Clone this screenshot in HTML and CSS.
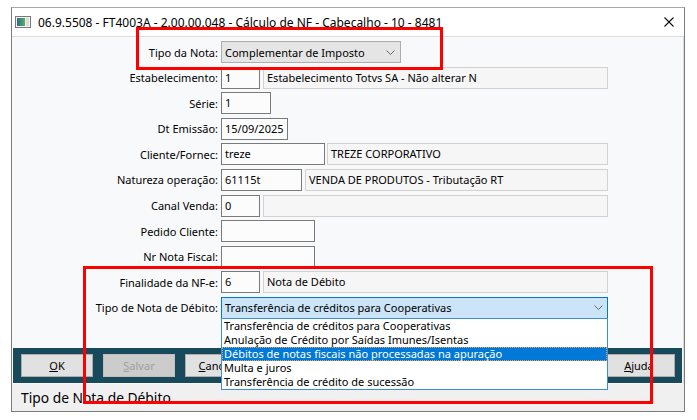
FILE: index.html
```html
<!DOCTYPE html>
<html lang="pt-BR">
<head>
    <meta charset="UTF-8">
    <meta name="viewport" content="width=device-width, initial-scale=1.0">
    <title>Cálculo de NF - Cabeçalho</title>
    <link rel="stylesheet" href="styles.css">
</head>
<body>
    <div class="window">
        <div class="titlebar">
            <svg class="app-icon" width="16" height="12" viewBox="0 0 16 12">
                <defs>
                    <linearGradient id="icon-grad" x1="0" x2="1" y1="0" y2="0">
                        <stop offset="0" stop-color="#2d6a92"/>
                        <stop offset="1" stop-color="#58b25c"/>
                    </linearGradient>
                </defs>
                <rect x="0.5" y="0.5" width="15" height="11" fill="#f4f4f4" stroke="#7a7a7a"/>
                <rect x="2" y="2" width="8" height="8" fill="url(#icon-grad)"/>
                <rect x="11" y="2" width="3" height="8" fill="#dcdcdc"/>
            </svg>
            <span class="title">06.9.5508 - FT4003A - 2.00.00.048 - Cálculo de NF - Cabeçalho - 10 - 8481</span>
            <svg class="close" width="10" height="10" viewBox="0 0 10 10">
                <path d="M0.5 0.5 L9.5 9.5 M9.5 0.5 L0.5 9.5" stroke="#111" stroke-width="1.1" fill="none"/>
            </svg>
        </div>

        <div class="client">
            <div class="form">
                <label>Tipo da Nota:</label>
                <div class="fields">
                    <div class="combo combo-type">
                        <span>Complementar de Imposto</span>
                        <svg class="chevron" width="9" height="5" viewBox="0 0 9 5"><polyline points="0.5,0.5 4.5,4.5 8.5,0.5" fill="none" stroke="#666"/></svg>
                    </div>
                </div>

                <label>Estabelecimento:</label>
                <div class="fields">
                    <div class="input w-39">1</div>
                    <div class="input readonly">Estabelecimento Totvs SA - Não alterar N</div>
                </div>

                <label>Série:</label>
                <div class="fields">
                    <div class="input w-50">1</div>
                </div>

                <label>Dt Emissão:</label>
                <div class="fields">
                    <div class="input w-67">15/09/2025</div>
                </div>

                <label>Cliente/Fornec:</label>
                <div class="fields fields-tight">
                    <div class="input w-104">treze</div>
                    <div class="input readonly">TREZE CORPORATIVO</div>
                </div>

                <label>Natureza operação:</label>
                <div class="fields">
                    <div class="input w-81">61115t</div>
                    <div class="input readonly">VENDA DE PRODUTOS - Tributação RT</div>
                </div>

                <label>Canal Venda:</label>
                <div class="fields">
                    <div class="input w-39">0</div>
                    <div class="input readonly"></div>
                </div>

                <label>Pedido Cliente:</label>
                <div class="fields">
                    <div class="input w-94"></div>
                </div>

                <label>Nr Nota Fiscal:</label>
                <div class="fields">
                    <div class="input w-94"></div>
                </div>

                <label>Finalidade da NF-e:</label>
                <div class="fields">
                    <div class="input w-39">6</div>
                    <div class="input readonly">Nota de Débito</div>
                </div>

                <label>Tipo de Nota de Débito:</label>
                <div class="fields">
                    <div class="combo combo-focus">
                        <span>Transferência de créditos para Cooperativas</span>
                        <svg class="chevron" width="9" height="5" viewBox="0 0 9 5"><polyline points="0.5,0.5 4.5,4.5 8.5,0.5" fill="none" stroke="#666"/></svg>
                    </div>
                    <div class="list">
                        <div class="item">Transferência de créditos para Cooperativas</div>
                        <div class="item">Anulação de Crédito por Saídas Imunes/Isentas</div>
                        <div class="item active">Débitos de notas fiscais não processadas na apuração</div>
                        <div class="item">Multa e juros</div>
                        <div class="item">Transferência de crédito de sucessão</div>
                    </div>
                </div>
            </div>

            <div class="buttonbar">
                <div class="btn"><u>O</u>K</div>
                <div class="btn disabled"><u>S</u>alvar</div>
                <div class="btn"><u>C</u>ancelar</div>
                <div class="btn btn-help"><u>A</u>juda</div>
            </div>
        </div>

        <div class="statusbar">Tipo de Nota de Débito</div>
    </div>

    <div class="mark mark-type"></div>
    <div class="mark mark-debit"></div>
</body>
</html>
```

FILE: styles.css
```css
body {
    margin: 0;
    padding: 7px 0 0 11px;
    width: 697px;
    height: 420px;
    box-sizing: border-box;
    position: relative;
    overflow: hidden;
    background: #fff;
    font-family: "Noto Sans", "Open Sans", sans-serif;
    font-size: 11px;
    color: #000;
}

.window {
    width: 674px;
    height: 405px;
    box-sizing: border-box;
    border: 1px solid #7c7c7c;
    border-top-color: #a8a8a8;
    display: flex;
    flex-direction: column;
}

.titlebar {
    height: 28px;
    flex-shrink: 0;
    background: #fff;
    display: flex;
    align-items: center;
    padding-left: 3px;
}

.app-icon {
    flex-shrink: 0;
}

.title {
    margin-left: 7px;
    font-size: 12px;
    white-space: nowrap;
}

.close {
    margin-left: auto;
    margin-right: 10px;
}

.client {
    height: 348px;
    flex-shrink: 0;
    box-sizing: border-box;
    border-top: 1px solid #dcdcdc;
    border-right: 1px solid #dcdcdc;
    background: #f8f9fa;
    display: flex;
    flex-direction: column;
}

.form {
    display: grid;
    grid-template-columns: 206px 387px;
    grid-auto-rows: 22px;
    column-gap: 3px;
    row-gap: 3.6px;
    padding-top: 4px;
}

.form label {
    text-align: right;
    align-self: center;
    white-space: nowrap;
}

.fields {
    display: flex;
    gap: 3px;
    position: relative;
}

.fields-tight {
    gap: 2px;
}

.input {
    height: 22px;
    box-sizing: border-box;
    border: 1px solid #7a7a7a;
    background: #fcfcfc;
    padding: 0 3px;
    line-height: 20px;
    white-space: nowrap;
    overflow: hidden;
}

.input.readonly {
    flex: 1;
    border-color: #d2d2d2;
    background: #f6f6f6;
}

.w-39 { width: 39px; }
.w-50 { width: 50px; }
.w-67 { width: 67px; }
.w-81 { width: 81px; }
.w-94 { width: 94px; }
.w-104 { width: 104px; }

.combo {
    height: 22px;
    box-sizing: border-box;
    flex: 1;
    border: 1px solid #adadad;
    background: #e5e5e5;
    display: flex;
    align-items: center;
    justify-content: space-between;
    padding: 0 5px 0 3px;
    white-space: nowrap;
}

.combo-type {
    flex: 0 0 180px;
}

.combo-focus {
    border-color: #0078d7;
    background: #cce4f7;
    padding-right: 4px;
}

.list {
    position: absolute;
    top: 21px;
    left: 0;
    right: 0;
    z-index: 3;
    background: #fff;
    border: 1px solid #3b8ede;
}

.item {
    height: 14px;
    line-height: 14px;
    padding-left: 2px;
    white-space: nowrap;
}

.item.active {
    background: #0078d7;
    color: #fff;
    outline: 1px dotted #f2a33a;
    outline-offset: -1px;
}

.buttonbar {
    margin: auto 1px 1px 1px;
    height: 35px;
    box-sizing: border-box;
    background: #184a5c;
    display: flex;
    gap: 10px;
    padding: 6px 7px 6px 8px;
}

.btn {
    width: 72px;
    height: 23px;
    box-sizing: border-box;
    border: 1px solid #adadad;
    background: #e1e1e1;
    text-align: center;
    line-height: 21px;
}

.btn.disabled {
    color: #a0a0a0;
    background: #cccccc;
    border-color: #bfbfbf;
}

.btn-help {
    margin-left: auto;
}

.statusbar {
    flex: 1;
    background: #f0f0f0;
    padding-left: 9px;
    font-size: 13.8px;
    line-height: 27px;
}

.mark {
    position: absolute;
    z-index: 5;
    box-sizing: border-box;
    border: 3px solid #f00;
    pointer-events: none;
}

.mark-type {
    left: 136px;
    top: 27px;
    width: 307px;
    height: 43px;
}

.mark-debit {
    left: 83px;
    top: 266px;
    width: 570px;
    height: 138px;
}
```
